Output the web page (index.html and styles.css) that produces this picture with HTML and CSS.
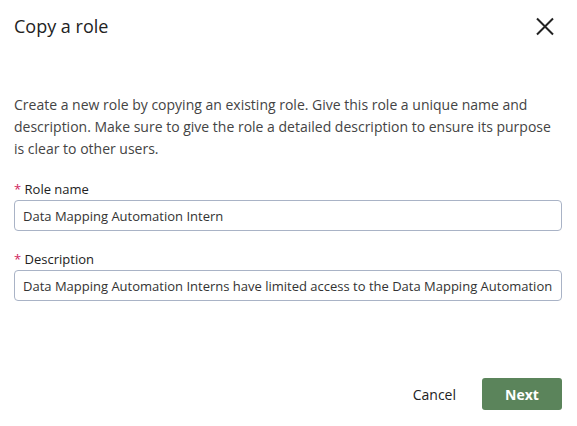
FILE: index.html
```html
<!DOCTYPE html>
<html lang="en">

<head>
    <meta charset="UTF-8">
    <title>Copy a role</title>
    <link rel="stylesheet" href="styles.css">
</head>

<body>
    <div class="dialog">
        <div class="dialog-header">
            <h2>Copy a role</h2>
            <button class="close-btn" aria-label="Close">
                <svg width="18" height="19" viewBox="0 0 18 19">
                    <path d="M1 1.5 L17 17.5 M17 1.5 L1 17.5" stroke="#222" stroke-width="2" fill="none" />
                </svg>
            </button>
        </div>

        <p class="intro">Create a new role by copying an existing role. Give this role a unique name and
            description. Make sure to give the role a detailed description to ensure its purpose
            is clear to other users.</p>

        <div class="field">
            <label for="roleName"><span class="req">*</span> Role name</label>
            <input type="text" id="roleName" value="Data Mapping Automation Intern">
        </div>

        <div class="field">
            <label for="desc"><span class="req">*</span> Description</label>
            <input type="text" id="desc"
                value="Data Mapping Automation Interns have limited access to the Data Mapping Automation">
        </div>

        <div class="dialog-footer">
            <button class="btn-cancel">Cancel</button>
            <button class="btn-next">Next</button>
        </div>
    </div>
</body>

</html>
```

FILE: styles.css
```css
body {
    margin: 0;
    font-family: "Open Sans", sans-serif;
    background: white;
    color: #333;
}

.dialog {
    padding: 0 15px 0 14px;
}

.dialog-header {
    display: flex;
    justify-content: space-between;
    align-items: center;
    height: 52px;
}

h2 {
    margin: 0;
    font-size: 18px;
    font-weight: 400;
    color: #222;
}

.close-btn {
    background: none;
    border: none;
    padding: 0;
    margin-right: 8px;
    cursor: pointer;
    display: flex;
}

.intro {
    margin: 42px 0 20px;
    font-size: 14px;
    line-height: 22px;
    color: #444;
}

.field {
    margin-bottom: 19px;
}

label {
    display: block;
    font-size: 13px;
    font-weight: 500;
    color: #222;
    margin-bottom: 2px;
}

.req {
    color: #d0245e;
    font-weight: 400;
}

input[type="text"] {
    width: 100%;
    box-sizing: border-box;
    height: 31px;
    padding: 0 8px;
    border: 1px solid #a9b3c6;
    border-radius: 4px;
    font-family: "Open Sans", sans-serif;
    font-size: 13px;
    color: #333;
}

.dialog-footer {
    display: flex;
    justify-content: flex-end;
    align-items: center;
    gap: 20px;
    margin-top: 77px;
}

.btn-cancel {
    background: none;
    border: none;
    font-family: "Open Sans", sans-serif;
    font-size: 14px;
    color: #222;
    cursor: pointer;
}

.btn-next {
    width: 80px;
    height: 32px;
    background: #5b845b;
    color: white;
    border: none;
    border-radius: 3px;
    font-family: "Open Sans", sans-serif;
    font-size: 14px;
    font-weight: 700;
    cursor: pointer;
}
```
